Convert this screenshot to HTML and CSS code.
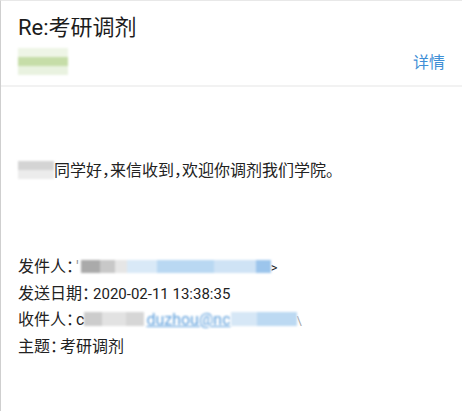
FILE: index.html
```html
<!DOCTYPE html>
<html lang="zh-CN">

<head>
    <meta charset="UTF-8">
    <meta name="viewport" content="width=device-width, initial-scale=1.0">
    <title>Re:考研调剂</title>
    <link rel="stylesheet" href="styles.css">
</head>

<body>
    <div class="mail">
        <header class="mail-head">
            <h1 class="subject">Re:考研调剂</h1>
            <div class="head-row">
                <span class="mask mask-green"></span>
                <a class="detail">详情</a>
            </div>
        </header>

        <div class="mail-body">
            <p class="greeting"><span class="mask mask-name"></span>同学好，来信收到，欢迎你调剂我们学院。</p>

            <div class="quote">
                <p>发件人：<span class="tick">'</span><span class="mask mask-from"></span><span class="tail">&gt;</span></p>
                <p>发送日期：<span class="date">2020-02-11 13:38:35</span></p>
                <p>收件人：<span class="lead">c</span><span class="mask mask-to-gray"></span><span class="to-link">duzhou@nc</span><span class="mask mask-to-blue"></span><span class="tail slash">\</span></p>
                <p>主题：<span class="lead">考研调剂</span></p>
            </div>
        </div>
    </div>
</body>

</html>
```

FILE: styles.css
```css
* {
    margin: 0;
    padding: 0;
    box-sizing: border-box;
}

body {
    font-family: Roboto, "Noto Sans CJK SC", sans-serif;
    font-feature-settings: "halt";
    background: #fff;
    color: #222;
}

.mail {
    min-height: 100vh;
    border-left: 1px solid #cfcfcf;
    border-top: 1px solid #e8e8e8;
}

.mail-head {
    padding: 12px 17px 10px 17px;
    border-bottom: 2px solid #f2f2f2;
}

.subject {
    font-size: 22px;
    line-height: 30px;
    font-weight: normal;
    color: #1c1c1c;
}

.head-row {
    display: flex;
    justify-content: space-between;
    align-items: flex-end;
    margin-top: 5px;
    height: 27px;
}

.detail {
    font-size: 16px;
    line-height: 20px;
    color: #3f8fd6;
    margin-bottom: 2px;
}

.mask {
    display: inline-block;
    filter: blur(1.2px);
}

.mask-green {
    width: 50px;
    height: 27px;
    background:
        linear-gradient(to bottom, #eef5e6 0 35%, #c6dda8 35% 65%, #e9f2e0 65% 100%);
}

.mail-body {
    padding: 72px 16px 0 17px;
}

.greeting {
    font-size: 16px;
    line-height: 24px;
}

.mask-name {
    width: 36px;
    height: 18px;
    vertical-align: -3px;
    background: linear-gradient(to bottom, #d4d4d4 0 50%, #ececec 50% 100%);
}

.quote {
    margin-top: 71px;
    font-size: 16px;
    line-height: 26px;
}

.lead {
    margin-left: 2px;
}

.date {
    font-size: 15px;
    margin-left: 3px;
}

.tick {
    color: #999;
    margin: 0 2px 0 2px;
}

.mask-from {
    width: 190px;
    height: 13px;
    vertical-align: -1px;
    background: linear-gradient(to right,
        #aaa 0 10%, #c8c8c8 10% 18%, #e6e6e6 18% 24%,
        #d9e9f7 24% 40%, #b9d8f2 40% 70%, #cfe3f5 70% 92%, #9cc5ec 92% 100%);
}

.tail {
    font-size: 13px;
}

.mask-to-gray {
    width: 60px;
    height: 14px;
    vertical-align: -1px;
    background: linear-gradient(to right, #ccc 0 30%, #e2e2e2 30% 70%, #d6d6d6 70% 100%);
}

.to-link {
    color: #5a9ddb;
    text-decoration: underline;
    filter: blur(0.9px);
    display: inline-block;
    margin-left: 2px;
}

.mask-to-blue {
    width: 66px;
    height: 14px;
    vertical-align: -1px;
    background: linear-gradient(to right, #d6e7f6 0 40%, #bcd9f2 40% 100%);
}

.slash {
    color: #aaa;
}
```
